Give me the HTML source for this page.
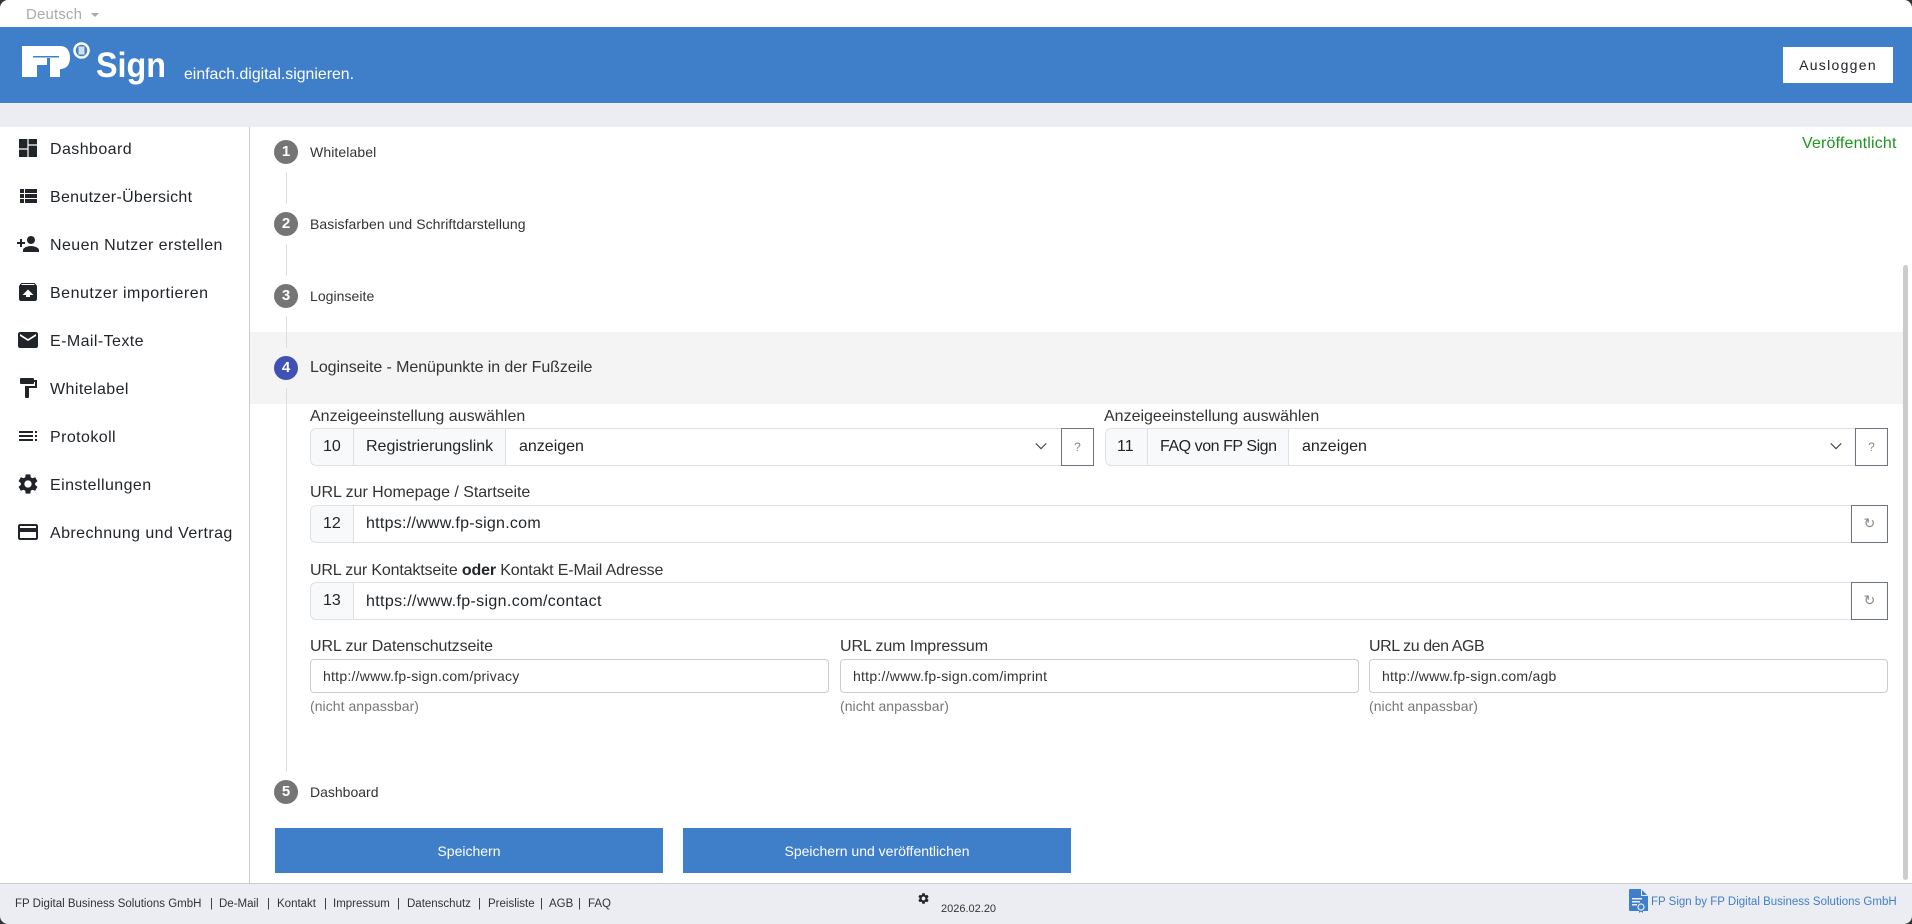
<!DOCTYPE html>
<html lang="de"><head><meta charset="utf-8"><title>FP Sign</title>
<style>
*{box-sizing:border-box}
html,body{margin:0;padding:0;width:1912px;height:924px;overflow:hidden;background:#fff;font-family:"Liberation Sans",sans-serif;color:#212529}
.a{position:absolute;white-space:nowrap}
.t{position:absolute;white-space:nowrap;line-height:20px;height:20px}
.nav{left:50px;font-size:16px;letter-spacing:.42px;color:#212529}
.ic{position:absolute;left:16px;width:24px;height:24px;fill:#212529}
.c{position:absolute;left:274px;width:24px;height:24px;border-radius:50%;background:#757575;color:#fff;font-size:15px;font-weight:bold;line-height:24px;text-align:center}
.ln{position:absolute;left:286px;width:1px;background:#ddd}
.sl{left:310px;font-size:14px;color:#333}
.lb{font-size:16px;color:#333}
.b{position:absolute;border:1px solid #dee2e6;background:#fff}
.ad{background:#f8f9fa}
.v{font-size:16px;color:#212529}
.btn{position:absolute;border:1px solid #6c757d;background:#fff;color:#888;text-align:center;font-size:12px}
.inp{position:absolute;top:659px;height:34px;width:519px;border:1px solid #ccc;border-radius:4px;background:#fff;font-size:14px;line-height:32px;padding-left:12px;color:#333;letter-spacing:.25px}
.hint{top:696px;font-size:14px;color:#777;letter-spacing:.05px}
.sv{position:absolute;top:828px;height:45px;width:388px;background:#3f7fca;color:#fff;font-size:14px;line-height:46px;text-align:center}
.f{top:894px;font-size:11.5px;color:#333}
</style></head><body>

<!-- top bar -->
<div class="t" style="left:26px;top:5px;font-size:15px;letter-spacing:.15px;color:#aaa">Deutsch</div>
<div class="a" style="left:91px;top:13px;width:0;height:0;border-left:4px solid transparent;border-right:4px solid transparent;border-top:4px solid #aaa"></div>

<!-- header -->
<div class="a" style="left:0;top:27px;width:1912px;height:76px;background:#3f7fca"></div>
<svg class="a" style="left:0;top:27px" width="400" height="76" viewBox="0 27 400 76">
  <path fill="#fff" d="M22 46H60C67 46 70 51 70 57.500C70 64 67 69 60 69V77H50V58H47V65H37V77H22Z"/>
  <rect x="33" y="56" width="26" height="1.500" fill="#3f7fca"/>
  <circle cx="81.500" cy="50.500" r="7" fill="none" stroke="#fff" stroke-width="2.500"/>
  <rect x="78.500" y="46.500" width="6" height="8" fill="#cfe0f4"/>
  <text x="96" y="77" font-family="Liberation Sans" font-weight="bold" font-size="35" fill="#fff" textLength="70" lengthAdjust="spacingAndGlyphs">Sign</text>
  <text x="184" y="79" font-family="Liberation Sans" font-size="16" fill="#fff" textLength="170" lengthAdjust="spacingAndGlyphs">einfach.digital.signieren.</text>
</svg>
<div class="a" style="left:1783px;top:47px;width:110px;height:36px;background:#fff;color:#212529;font-size:14px;letter-spacing:1.300px;line-height:36px;text-align:center">Ausloggen</div>

<!-- grey band -->
<div class="a" style="left:0;top:103px;width:1912px;height:24px;background:#ecedf2"></div>

<!-- sidebar -->
<div class="a" style="left:249px;top:127px;width:1px;height:757px;background:#ccc"></div>

<svg class="ic" style="top:136px" viewBox="0 0 24 24"><path d="M3 3h8.400v9.400H3zM3 13.600h8.400V21H3zM12.600 3H21v5.400h-8.400zM12.600 9.600H21V21h-8.400z"/></svg>
<div class="t nav" style="top:140px">Dashboard</div>
<svg class="ic" style="top:184px" viewBox="0 0 24 24"><path d="M4 5h4v4H4zM4 10h4v4H4zM4 15h4v4H4zM9 5h12v4H9zM9 10h12v4H9zM9 15h12v4H9z"/></svg>
<div class="t nav" style="top:188px;letter-spacing:.3px">Benutzer-Übersicht</div>
<svg class="ic" style="top:232px" viewBox="0 0 24 24"><path d="M15 12c2.210 0 4-1.790 4-4s-1.790-4-4-4-4 1.790-4 4 1.790 4 4 4zm-9-2V7H4v3H1v2h3v3h2v-3h3v-2H6zm9 4c-2.670 0-8 1.340-8 4v2h16v-2c0-2.660-5.330-4-8-4z"/></svg>
<div class="t nav" style="top:236px">Neuen Nutzer erstellen</div>
<svg class="ic" style="top:280px" viewBox="0 0 24 24"><path d="M20.550 5.220l-1.390-1.680C18.880 3.210 18.470 3 18 3H6c-.47 0-.88.21-1.150.55L3.460 5.220C3.170 5.570 3 6.010 3 6.500V19c0 1.100.89 2 2 2h14c1.100 0 2-.9 2-2V6.500c0-.49-.17-.93-.45-1.280zM12 9.500l5.500 5.500H14v2h-4v-2H6.500L12 9.500zM5.120 5l.82-1h12l.93 1H5.120z"/></svg>
<div class="t nav" style="top:284px;letter-spacing:.5px">Benutzer importieren</div>
<svg class="ic" style="top:328px" viewBox="0 0 24 24"><path d="M20 4H4c-1.100 0-1.990.9-1.990 2L2 18c0 1.100.9 2 2 2h16c1.100 0 2-.9 2-2V6c0-1.100-.9-2-2-2zm0 4l-8 5-8-5V6l8 5 8-5v2z"/></svg>
<div class="t nav" style="top:332px">E-Mail-Texte</div>
<svg class="ic" style="top:376px" viewBox="0 0 24 24"><path d="M18 4V3c0-.55-.45-1-1-1H5c-.55 0-1 .45-1 1v4c0 .55.45 1 1 1h12c.55 0 1-.45 1-1V6h1v4H9v11c0 .55.45 1 1 1h2c.55 0 1-.45 1-1v-9h8V4h-3z"/></svg>
<div class="t nav" style="top:380px">Whitelabel</div>
<svg class="ic" style="top:424px" viewBox="0 0 24 24"><path d="M3 7h14v2H3zM3 11h14v2H3zM3 15h14v2H3zM19 7h2v2h-2zM19 11h2v2h-2zM19 15h2v2h-2z"/></svg>
<div class="t nav" style="top:428px">Protokoll</div>
<svg class="ic" style="top:472px" viewBox="0 0 24 24"><path d="M19.140 12.940c.04-.3.06-.61.06-.94 0-.32-.02-.64-.07-.94l2.030-1.580c.18-.14.23-.41.12-.61l-1.920-3.320c-.12-.22-.37-.29-.59-.22l-2.390.96c-.5-.38-1.030-.7-1.620-.94l-.36-2.540c-.04-.24-.24-.41-.48-.41h-3.840c-.24 0-.43.17-.47.41l-.36 2.540c-.59.24-1.130.57-1.620.94l-2.390-.96c-.22-.08-.47 0-.59.22L2.740 8.870c-.12.21-.08.47.12.61l2.030 1.580c-.05.3-.09.63-.09.94s.02.64.07.94l-2.030 1.580c-.18.14-.23.41-.12.61l1.920 3.320c.12.22.37.29.59.22l2.390-.96c.5.38 1.030.7 1.620.94l.36 2.540c.05.24.24.41.48.41h3.840c.24 0 .44-.17.47-.41l.36-2.540c.59-.24 1.130-.56 1.620-.94l2.390.96c.22.08.47 0 .59-.22l1.920-3.320c.12-.22.07-.47-.12-.61l-2.010-1.580zM12 15.600c-1.980 0-3.600-1.620-3.600-3.600s1.620-3.600 3.600-3.600 3.600 1.620 3.600 3.600-1.620 3.600-3.600 3.600z"/></svg>
<div class="t nav" style="top:476px">Einstellungen</div>
<svg class="ic" style="top:520px" viewBox="0 0 24 24"><path d="M20 4H4c-1.110 0-1.990.89-1.990 2L2 18c0 1.110.89 2 2 2h16c1.110 0 2-.89 2-2V6c0-1.110-.89-2-2-2zm0 14H4v-6h16v6zm0-10H4V6h16v2z"/></svg>
<div class="t nav" style="top:524px">Abrechnung und Vertrag</div>

<!-- active step band -->
<div class="a" style="left:250px;top:332px;width:1653px;height:72px;background:#f4f4f4"></div>

<!-- stepper -->
<div class="ln" style="top:172px;height:32px"></div>
<div class="ln" style="top:244px;height:32px"></div>
<div class="ln" style="top:316px;height:32px"></div>
<div class="ln" style="top:388px;height:384px"></div>
<div class="c" style="top:140px">1</div>
<div class="c" style="top:212px">2</div>
<div class="c" style="top:284px">3</div>
<div class="c" style="top:356px;background:#3f51b5">4</div>
<div class="c" style="top:780px">5</div>
<div class="t sl" style="top:142px;letter-spacing:.1px">Whitelabel</div>
<div class="t sl" style="top:214px;letter-spacing:.07px">Basisfarben und Schriftdarstellung</div>
<div class="t sl" style="top:286px;letter-spacing:.05px">Loginseite</div>
<div class="t sl" style="top:358px;font-size:16px;letter-spacing:-.08px">Loginseite - Menüpunkte in der Fußzeile</div>
<div class="t sl" style="top:782px">Dashboard</div>

<div class="t" style="left:1802px;top:134px;font-size:16px;letter-spacing:.17px;color:#1f951f">Veröffentlicht</div>

<!-- row 1 -->
<div class="t lb" style="left:310px;top:407px">Anzeigeeinstellung auswählen</div>
<div class="t lb" style="left:1104px;top:407px">Anzeigeeinstellung auswählen</div>

<div class="b ad" style="left:310px;top:428px;width:44px;height:38px;border-radius:6px 0 0 6px"></div>
<div class="b ad" style="left:353px;top:428px;width:153px;height:38px"></div>
<div class="b" style="left:505px;top:428px;width:557px;height:38px"></div>
<div class="t v" style="left:323px;top:437px">10</div>
<div class="t v" style="left:366px;top:437px">Registrierungslink</div>
<div class="t v" style="left:519px;top:437px">anzeigen</div>
<svg class="a" style="left:1034px;top:439px" width="14" height="14" viewBox="0 0 16 16"><path d="M2 5l6 6 6-6" fill="none" stroke="#444" stroke-width="1.400"/></svg>
<div class="btn" style="left:1061px;top:428px;width:33px;height:38px;line-height:36px">?</div>

<div class="b ad" style="left:1105px;top:428px;width:43px;height:38px;border-radius:6px 0 0 6px"></div>
<div class="b ad" style="left:1147px;top:428px;width:142px;height:38px"></div>
<div class="b" style="left:1288px;top:428px;width:568px;height:38px"></div>
<div class="t v" style="left:1117px;top:437px">11</div>
<div class="t v" style="left:1160px;top:437px;letter-spacing:-.45px">FAQ von FP Sign</div>
<div class="t v" style="left:1302px;top:437px">anzeigen</div>
<svg class="a" style="left:1829px;top:439px" width="14" height="14" viewBox="0 0 16 16"><path d="M2 5l6 6 6-6" fill="none" stroke="#444" stroke-width="1.400"/></svg>
<div class="btn" style="left:1855px;top:428px;width:33px;height:38px;line-height:36px">?</div>

<!-- row 2 -->
<div class="t lb" style="left:310px;top:483px;letter-spacing:-.05px">URL zur Homepage / Startseite</div>
<div class="b ad" style="left:310px;top:505px;width:44px;height:38px;border-radius:6px 0 0 6px"></div>
<div class="b" style="left:353px;top:505px;width:1499px;height:38px"></div>
<div class="t v" style="left:323px;top:514px">12</div>
<div class="t v" style="left:366px;top:514px;letter-spacing:.26px">https://www.fp-sign.com</div>
<div class="btn" style="left:1851px;top:505px;width:37px;height:38px;line-height:36px;font-size:14px;font-family:'DejaVu Sans',sans-serif">↻</div>

<!-- row 3 -->
<div class="t lb" style="left:310px;top:561px;letter-spacing:-.15px">URL zur Kontaktseite <b style="color:#212529">oder</b> Kontakt E-Mail Adresse</div>
<div class="b ad" style="left:310px;top:582px;width:44px;height:38px;border-radius:6px 0 0 6px"></div>
<div class="b" style="left:353px;top:582px;width:1499px;height:38px"></div>
<div class="t v" style="left:323px;top:591px">13</div>
<div class="t v" style="left:366px;top:592px;letter-spacing:.35px">https://www.fp-sign.com/contact</div>
<div class="btn" style="left:1851px;top:582px;width:37px;height:38px;line-height:36px;font-size:14px;font-family:'DejaVu Sans',sans-serif">↻</div>

<!-- row 4 -->
<div class="t lb" style="left:310px;top:637px;letter-spacing:-.1px">URL zur Datenschutzseite</div>
<div class="t lb" style="left:840px;top:637px;letter-spacing:-.1px">URL zum Impressum</div>
<div class="t lb" style="left:1369px;top:637px;letter-spacing:-.43px">URL zu den AGB</div>
<div class="inp" style="left:310px">http://www.fp-sign.com/privacy</div>
<div class="inp" style="left:840px">http://www.fp-sign.com/imprint</div>
<div class="inp" style="left:1369px">http://www.fp-sign.com/agb</div>
<div class="t hint" style="left:310px">(nicht anpassbar)</div>
<div class="t hint" style="left:840px">(nicht anpassbar)</div>
<div class="t hint" style="left:1369px">(nicht anpassbar)</div>

<!-- action buttons -->
<div class="sv" style="left:275px">Speichern</div>
<div class="sv" style="left:683px">Speichern und veröffentlichen</div>

<!-- scrollbar -->
<div class="a" style="left:1903px;top:265px;width:5px;height:615px;border-radius:3px;background:#ccc"></div>

<!-- footer -->
<div class="a" style="left:0;top:883px;width:1912px;height:41px;background:#ecedf2;border-top:1px solid #ccc"></div>
<div class="t f" style="left:15px">FP Digital Business Solutions GmbH</div>
<div class="t f" style="left:210px">|</div>
<div class="t f" style="left:219px">De-Mail</div>
<div class="t f" style="left:267px">|</div>
<div class="t f" style="left:277px">Kontakt</div>
<div class="t f" style="left:324px">|</div>
<div class="t f" style="left:333px">Impressum</div>
<div class="t f" style="left:397px">|</div>
<div class="t f" style="left:407px">Datenschutz</div>
<div class="t f" style="left:478px">|</div>
<div class="t f" style="left:488px">Preisliste</div>
<div class="t f" style="left:540px">|</div>
<div class="t f" style="left:549px">AGB</div>
<div class="t f" style="left:578px">|</div>
<div class="t f" style="left:588px">FAQ</div>
<svg class="a" style="left:917px;top:892px;fill:#212529" width="13" height="13" viewBox="0 0 24 24"><path d="M19.140 12.940c.04-.3.06-.61.06-.94 0-.32-.02-.64-.07-.94l2.030-1.580c.18-.14.23-.41.12-.61l-1.920-3.320c-.12-.22-.37-.29-.59-.22l-2.390.96c-.5-.38-1.030-.7-1.620-.94l-.36-2.540c-.04-.24-.24-.41-.48-.41h-3.840c-.24 0-.43.17-.47.41l-.36 2.540c-.59.24-1.130.57-1.620.94l-2.390-.96c-.22-.08-.47 0-.59.22L2.740 8.870c-.12.21-.08.47.12.61l2.030 1.580c-.05.3-.09.63-.09.94s.02.64.07.94l-2.030 1.580c-.18.14-.23.41-.12.61l1.920 3.320c.12.22.37.29.59.22l2.390-.96c.5.38 1.030.7 1.620.94l.36 2.540c.05.24.24.41.48.41h3.840c.24 0 .44-.17.47-.41l.36-2.540c.59-.24 1.130-.56 1.620-.94l2.390.96c.22.08.47 0 .59-.22l1.920-3.320c.12-.22.07-.47-.12-.61l-2.010-1.580zM12 15.600c-1.980 0-3.600-1.620-3.600-3.600s1.620-3.600 3.600-3.600 3.600 1.620 3.600 3.600-1.620 3.600-3.600 3.600z"/></svg>
<div class="t" style="left:941px;top:899px;font-size:11px;color:#333">2026.02.20</div>
<svg class="a" style="left:1629px;top:889px" width="19" height="25" viewBox="0 0 19 25">
  <path fill="#3f7fca" d="M1 0H12L19 7V22H14V24L12 22.500 10 24V22H1C.4 22 0 21.600 0 21V1C0 .4.4 0 1 0Z"/>
  <path fill="#ecedf2" d="M12 0L19 7H12Z"/>
  <path fill="#3f7fca" d="M13 1L18 6H13Z"/>
  <rect x="3" y="9" width="10" height="1.500" fill="#ecedf2"/><rect x="3" y="12" width="8" height="1.500" fill="#ecedf2"/><rect x="3" y="15" width="5" height="1.500" fill="#ecedf2"/>
  <circle cx="12" cy="18" r="3" fill="#3f7fca" stroke="#ecedf2" stroke-width="1.200"/>
</svg>
<div class="t" style="left:1651px;top:892px;font-size:11.5px;color:#3f7fca">FP Sign by FP Digital Business Solutions GmbH</div>

<!-- window corners -->
<svg class="a" style="left:0;top:0" width="8" height="8"><path d="M0 0H8A8 8 0 0 0 0 8Z" fill="#333"/></svg>
<svg class="a" style="left:1904px;top:0" width="8" height="8"><path d="M8 0H0A8 8 0 0 1 8 8Z" fill="#333"/></svg>
<svg class="a" style="left:0;top:916px" width="8" height="8"><path d="M0 8H8A8 8 0 0 1 0 0Z" fill="#333"/></svg>
<svg class="a" style="left:1904px;top:916px" width="8" height="8"><path d="M8 8H0A8 8 0 0 0 8 0Z" fill="#333"/></svg>
</body></html>
